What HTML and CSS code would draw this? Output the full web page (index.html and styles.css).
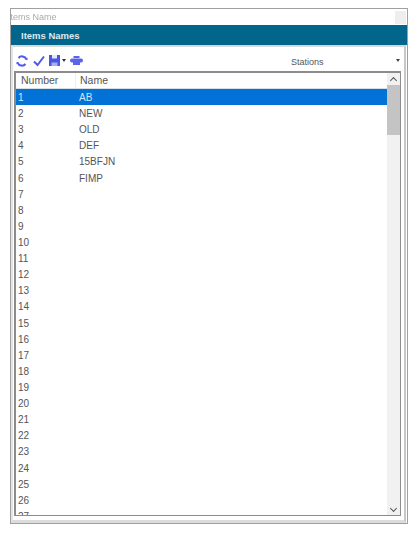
FILE: index.html
```html
<!DOCTYPE html>
<html lang="en">
<head>
  <meta charset="UTF-8">
  <title>Items Name</title>
  <link rel="stylesheet" href="styles.css">
</head>
<body>
  <div class="window">
    <div class="title-bar">
      <span class="title-text">Items Name</span>
      <span class="close-box"></span>
    </div>
    <div class="band">Items Names</div>
    <div class="panel">
      <div class="toolbar">
        <!-- refresh -->
        <svg class="icon" width="12" height="12" viewBox="0 0 12 12">
          <path d="M10.300 4.200A4.600 4.600 0 0 0 2.500 3M1.700 7.800A4.600 4.600 0 0 0 9.500 9" fill="none" stroke="#4f5ae6" stroke-width="2"/>
          <path d="M11.500 5V2.500L9 5zM.5 7V9.500L3 7z" fill="#4f5ae6"/>
        </svg>
        <!-- check -->
        <svg class="icon check-icon" width="12" height="12" viewBox="0 0 12 12">
          <path d="M1 6.500l3.500 3.500L11 1.500" fill="none" stroke="#4f5ae6" stroke-width="2"/>
        </svg>
        <!-- save -->
        <svg class="icon save-icon" width="11" height="11" viewBox="0 0 11 11">
          <path d="M0 0h11v11H0z" fill="#4a56e4"/>
          <path d="M3 0h5v3.500H3z" fill="#e4e6fc"/>
          <path d="M2.500 7.500h6V11h-6z" fill="#a8aef2"/>
        </svg>
        <span class="save-arrow"></span>
        <!-- print -->
        <svg class="icon" width="13" height="11" viewBox="0 0 13 11">
          <path d="M3.500 1h6v2h-6zM2 3.500h9Q13 3.500 13 5.500T11 7.500H10V10H3V7.500H2Q0 7.500 0 5.500T2 3.500z" fill="#5a64ea"/>
        </svg>
        <div class="combo">
          <span class="combo-text">Stations</span>
          <span class="combo-arrow"></span>
        </div>
      </div>

      <div class="list">
        <div class="list-body">
          <div class="list-head">
            <div class="col-num head-cell">Number</div>
            <div class="col-name head-cell">Name</div>
          </div>
          <div class="rows">
            <div class="row selected"><div class="col-num">1</div><div class="col-name">AB</div></div>
            <div class="row"><div class="col-num">2</div><div class="col-name">NEW</div></div>
            <div class="row"><div class="col-num">3</div><div class="col-name">OLD</div></div>
            <div class="row"><div class="col-num">4</div><div class="col-name">DEF</div></div>
            <div class="row"><div class="col-num">5</div><div class="col-name">15BFJN</div></div>
            <div class="row"><div class="col-num">6</div><div class="col-name">FIMP</div></div>
            <div class="row"><div class="col-num">7</div></div>
            <div class="row"><div class="col-num">8</div></div>
            <div class="row"><div class="col-num">9</div></div>
            <div class="row"><div class="col-num">10</div></div>
            <div class="row"><div class="col-num">11</div></div>
            <div class="row"><div class="col-num">12</div></div>
            <div class="row"><div class="col-num">13</div></div>
            <div class="row"><div class="col-num">14</div></div>
            <div class="row"><div class="col-num">15</div></div>
            <div class="row"><div class="col-num">16</div></div>
            <div class="row"><div class="col-num">17</div></div>
            <div class="row"><div class="col-num">18</div></div>
            <div class="row"><div class="col-num">19</div></div>
            <div class="row"><div class="col-num">20</div></div>
            <div class="row"><div class="col-num">21</div></div>
            <div class="row"><div class="col-num">22</div></div>
            <div class="row"><div class="col-num">23</div></div>
            <div class="row"><div class="col-num">24</div></div>
            <div class="row"><div class="col-num">25</div></div>
            <div class="row"><div class="col-num">26</div></div>
            <div class="row"><div class="col-num">27</div></div>
          </div>
        </div>
        <div class="scrollbar">
          <div class="scroll-btn"><span class="chev chev-up"></span></div>
          <div class="scroll-track"><div class="scroll-thumb"></div></div>
          <div class="scroll-btn"><span class="chev chev-down"></span></div>
        </div>
      </div>
    </div>
  </div>
</body>
</html>
```

FILE: styles.css
```css
html, body {
  margin: 0;
  padding: 0;
  background: #fff;
}
body {
  padding: 8px 10px 0 10px;
  font-family: "Liberation Sans", Arial, sans-serif;
  color: #444;
}
.window {
  width: 398px;
  height: 516px;
  box-sizing: border-box;
  border: 1px solid #a0a0a0;
  display: flex;
  flex-direction: column;
  filter: blur(0.5px);
}
.title-bar {
  height: 16px;
  display: flex;
  justify-content: space-between;
  align-items: center;
  overflow: hidden;
}
.title-text {
  font-size: 9px;
  color: #aaa;
  margin-left: -3px;
}
.close-box {
  width: 11px;
  height: 13px;
  background: #eee;
  margin-right: 1px;
}
.band {
  height: 20px;
  background: #02658c;
  color: #dce9f0;
  font-size: 9.5px;
  font-weight: bold;
  line-height: 21px;
  padding-left: 10px;
}
.panel {
  flex: 1;
  min-height: 0;
  display: flex;
  flex-direction: column;
  background: #fff;
  border-top: 2px solid #d8d8d8;
  border-left: 2px solid #e4e4e4;
  border-right: 2px solid #c8c8c8;
  border-bottom: 3px solid #dcdcdc;
  padding: 0 3px 4px 1px;
  margin-right: 1px;
}
.toolbar {
  height: 21px;
  margin-top: 3px;
  display: flex;
  align-items: center;
  padding-left: 2px;
}
.icon {
  flex: none;
  margin-right: 5px;
}
.check-icon {
  margin-right: 4px;
}
.save-icon {
  margin-right: 2px;
}
.save-arrow {
  width: 0;
  height: 0;
  border: 2px solid transparent;
  border-top: 3px solid #333;
  border-bottom: 0;
  margin-right: 4px;
}
.combo {
  flex: 1;
  display: flex;
  justify-content: space-between;
  align-items: center;
  padding-left: 203px;
  padding-right: 1px;
}
.combo-text {
  font-size: 9px;
  color: #555;
  padding-top: 2px;
}
.combo-arrow {
  width: 0;
  height: 0;
  border: 2.500px solid transparent;
  border-top: 3px solid #444;
  border-bottom: 0;
}
.list {
  flex: 1;
  min-height: 0;
  display: flex;
  border: 1px solid #8c8c8c;
  border-top-width: 2px;
  border-left-width: 2px;
}
.list-body {
  flex: 1;
  min-width: 0;
  overflow: hidden;
}
.list-head {
  height: 15px;
  display: flex;
  align-items: center;
  font-size: 10.5px;
  color: #555;
  border-bottom: 1px solid #d5dfe8;
}
.head-cell {
  border-right: 1px solid #eee;
  line-height: 15px;
}
.col-num {
  width: 60px;
  padding-left: 5px;
  box-sizing: border-box;
  flex: none;
}
.col-name {
  padding-left: 4px;
  flex: 1;
}
.row .col-num {
  padding-left: 2px;
}
.row .col-name {
  padding-left: 3px;
}
.head-cell.col-name {
  border-right: none;
}
.rows {
  font-size: 10px;
  color: #555;
}
.row {
  height: 16.12px;
  line-height: 17px;
  display: flex;
}
.selected {
  background: #0272d6;
  color: #cfe4f7;
}
.scrollbar {
  width: 13px;
  flex: none;
  background: #f1f1f1;
  display: flex;
  flex-direction: column;
}
.scroll-btn {
  height: 12px;
  display: flex;
  align-items: center;
  justify-content: center;
}
.scroll-track {
  flex: 1;
}
.scroll-thumb {
  height: 50px;
  background: #c4c4c4;
}
.chev {
  width: 4px;
  height: 4px;
  border-left: 1.500px solid #555;
  border-top: 1.500px solid #555;
}
.chev-up {
  transform: translateY(1px) rotate(45deg);
}
.chev-down {
  transform: translateY(-1px) rotate(225deg);
}
```
